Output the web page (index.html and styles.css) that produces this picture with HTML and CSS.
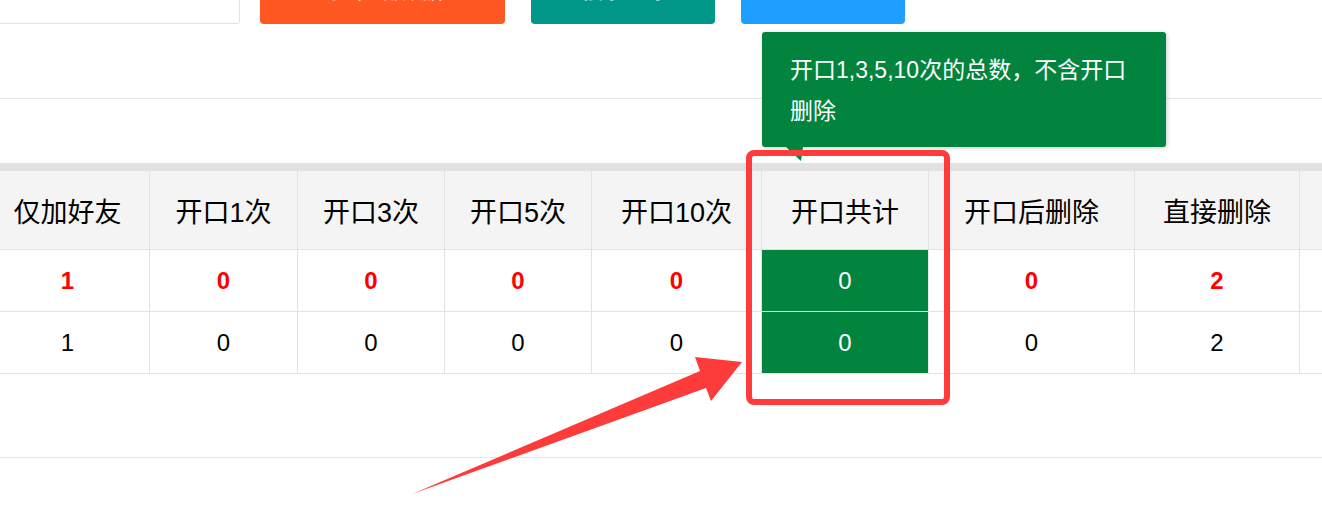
FILE: index.html
```html
<!DOCTYPE html>
<html lang="zh-CN">

<head>
    <meta charset="UTF-8">
    <meta name="viewport" content="width=device-width, initial-scale=1.0">
    <title>开口统计</title>
    <link rel="stylesheet" href="styles.css">
</head>

<body>
    <div class="page">
        <div class="toolbar">
            <input class="search" type="text">
            <button class="btn btn-orange">导出全部数据</button>
            <button class="btn btn-teal">搜索查询</button>
            <button class="btn btn-blue">重置</button>
        </div>

        <div class="filter"></div>

        <div class="grid">
            <table>
                <colgroup>
                    <col style="width: 164px">
                    <col style="width: 148px">
                    <col style="width: 147px">
                    <col style="width: 147px">
                    <col style="width: 170px">
                    <col style="width: 167px">
                    <col style="width: 206px">
                    <col style="width: 165px">
                    <col style="width: 160px">
                </colgroup>
                <thead>
                    <tr>
                        <th>仅加好友</th>
                        <th>开口1次</th>
                        <th>开口3次</th>
                        <th>开口5次</th>
                        <th>开口10次</th>
                        <th>开口共计</th>
                        <th>开口后删除</th>
                        <th>直接删除</th>
                        <th></th>
                    </tr>
                </thead>
                <tbody>
                    <tr class="total">
                        <td>1</td>
                        <td>0</td>
                        <td>0</td>
                        <td>0</td>
                        <td>0</td>
                        <td class="sum">0</td>
                        <td>0</td>
                        <td>2</td>
                        <td></td>
                    </tr>
                    <tr>
                        <td>1</td>
                        <td>0</td>
                        <td>0</td>
                        <td>0</td>
                        <td>0</td>
                        <td class="sum">0</td>
                        <td>0</td>
                        <td>2</td>
                        <td></td>
                    </tr>
                </tbody>
            </table>
        </div>

        <div class="pager"></div>

        <div class="tip">开口1,3,5,10次的总数，不含开口删除</div>
        <div class="mark"></div>
        <svg class="arrow" width="1322" height="512" viewBox="0 0 1322 512">
            <polygon points="412,494 700,371 695,357 742,362 711,401 706,388" fill="#fd3b3b" />
        </svg>
    </div>
</body>

</html>
```

FILE: styles.css
```css
body {
    margin: 0;
    font-family: "Liberation Sans", "Noto Sans CJK SC", sans-serif;
    color: #000;
    background: #fff;
    overflow: hidden;
}

.page {
    position: relative;
    width: 1322px;
    height: 512px;
    overflow: hidden;
}

.toolbar {
    display: flex;
    align-items: flex-start;
    height: 99px;
    box-sizing: border-box;
    border-bottom: 1px solid #e6e6e6;
}

.search {
    width: 260px;
    height: 50px;
    margin: -26px 0 0 -20px;
    box-sizing: border-box;
    border: 1px solid #e2e2e2;
    border-radius: 3px;
    background: #fff;
}

.btn {
    height: 50px;
    margin-top: -26px;
    padding: 0 0 14px;
    border: none;
    border-radius: 4px;
    color: #fff;
    font-family: inherit;
    font-size: 20px;
    line-height: 28px;
    vertical-align: top;
}

.btn-orange {
    width: 245px;
    margin-left: 20px;
    background: #ff5722;
}

.btn-teal {
    width: 184px;
    margin-left: 26px;
    background: #009688;
}

.btn-blue {
    width: 164px;
    margin-left: 26px;
    background: #1e9fff;
}

.filter {
    height: 64px;
}

.grid {
    border-top: 8px solid #e2e2e2;
}

table {
    margin-left: -15px;
    table-layout: fixed;
    border-collapse: collapse;
    width: 1474px;
}

th,
td {
    border: 1px solid #e2e2e2;
    border-top: none;
    text-align: center;
    padding: 0;
}

th {
    height: 78px;
    background: #f4f4f4;
    font-size: 27px;
    font-weight: normal;
}

td {
    height: 61px;
    font-size: 24px;
}

.total td {
    color: #ff0000;
    font-weight: bold;
}

td.sum,
.total td.sum {
    background: #02843f;
    color: #fff;
    font-weight: normal;
    border-color: #e8e8e8;
}

.pager {
    height: 83px;
    border-bottom: 1px solid #e6e6e6;
}

.tip {
    position: absolute;
    left: 762px;
    top: 32px;
    width: 404px;
    box-sizing: border-box;
    padding: 18px 28px 15px;
    background: #02843f;
    color: #fff;
    font-size: 23px;
    line-height: 41px;
    border-radius: 3px;
    box-shadow: 1px 1px 4px rgba(0, 0, 0, 0.2);
}

.tip::after {
    content: "";
    position: absolute;
    left: 24px;
    bottom: -14px;
    width: 17px;
    height: 14px;
    background: #02843f;
    clip-path: polygon(0 0, 100% 0, 88% 100%);
}

.mark {
    position: absolute;
    left: 746px;
    top: 150px;
    width: 204px;
    height: 255px;
    box-sizing: border-box;
    border: 6px solid #ff3b3b;
    border-radius: 8px;
}

.arrow {
    position: absolute;
    left: 0;
    top: 0;
    pointer-events: none;
}
```
